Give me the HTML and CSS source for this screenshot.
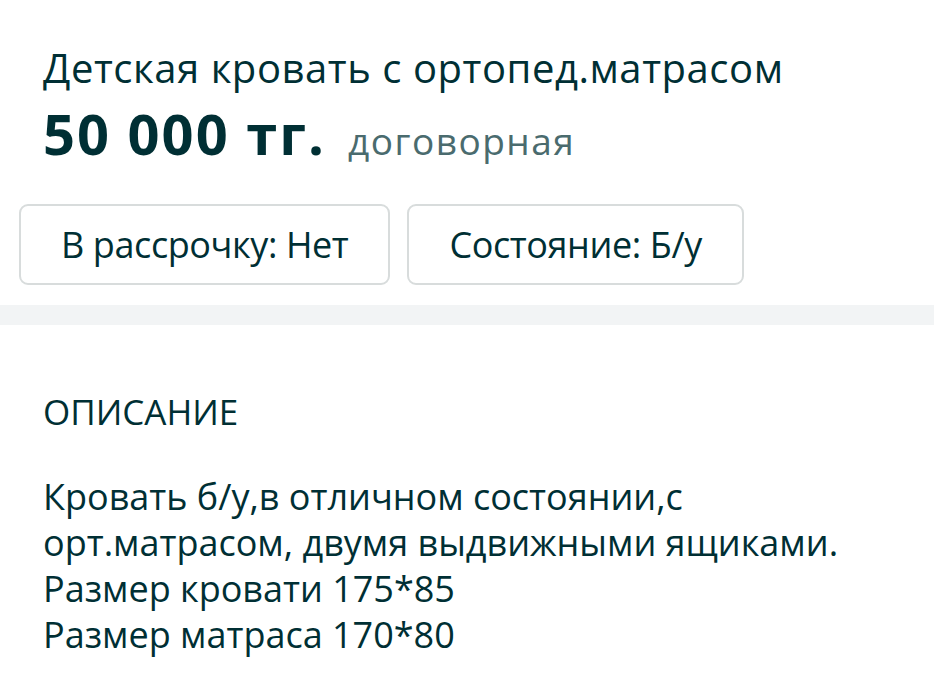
FILE: index.html
```html
<!DOCTYPE html>
<html lang="ru">
<head>
<meta charset="utf-8">
<link rel="stylesheet" href="styles.css">
</head>
<body>
<section class="head">
  <h1 class="title">Детская кровать с ортопед.матрасом</h1>
  <div class="price-row">
    <span class="price">50 000 тг.</span>
    <span class="nego">договорная</span>
  </div>
  <div class="chips">
    <div class="chip">В рассрочку: Нет</div>
    <div class="chip">Состояние: Б/у</div>
  </div>
</section>
<div class="band"></div>
<section class="desc">
  <h2 class="desc-title">ОПИСАНИЕ</h2>
  <p class="desc-text">Кровать б/у,в отличном состоянии,с<br>орт.матрасом, двумя выдвижными ящиками.<br>Размер кровати 175*85<br>Размер матраса 170*80</p>
</section>
</body>
</html>
```
FILE: styles.css
```css
html, body {
  margin: 0;
  padding: 0;
  background: #ffffff;
}
body {
  font-family: "Open Sans", "Noto Sans", sans-serif;
  color: #002f34;
  width: 934px;
  height: 700px;
  overflow: hidden;
}
.head {
  padding: 42px 0 0 43px;
}
.title {
  margin: 0;
  font-size: 40px;
  font-weight: 400;
  line-height: 52px;
  letter-spacing: 0.55px;
}
.price-row {
  display: flex;
  align-items: baseline;
  gap: 22px;
  margin-top: 7px;
  line-height: 64px;
}
.price {
  font-size: 56px;
  font-weight: 700;
  letter-spacing: 2px;
}
.nego {
  font-size: 37px;
  letter-spacing: 1.5px;
  color: #4a6b6e;
}
.chips {
  display: flex;
  gap: 17px;
  margin: 31px 0 0 -24px;
}
.chip {
  box-sizing: border-box;
  height: 81px;
  padding: 0 40px;
  border: 2px solid #d8dcdc;
  border-radius: 9px;
  display: flex;
  align-items: center;
  font-size: 36px;
  letter-spacing: -0.4px;
}
.band {
  height: 20px;
  margin-top: 20px;
  background: #f2f4f5;
}
.desc {
  padding: 65px 0 0 43px;
}
.desc-title {
  margin: 0;
  font-size: 35px;
  font-weight: 400;
  line-height: 44px;
}
.desc-text {
  margin: 40px 0 0;
  font-size: 36px;
  line-height: 46px;
}
```
